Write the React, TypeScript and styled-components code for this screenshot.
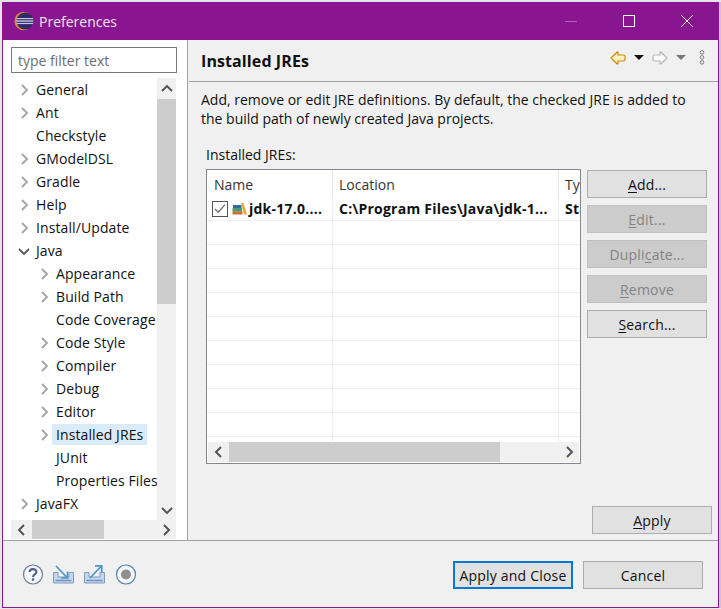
import React from "react";
import styled, { createGlobalStyle } from "styled-components";

const Global = createGlobalStyle`
	html, body {
		margin: 0;
		padding: 0;
		width: 721px;
		height: 609px;
		overflow: hidden;
		background: #e6e6e6;
	}
	* {
		box-sizing: border-box;
	}
`;

type TreeItem = {
	label: string;
	depth: number;
	twisty?: "closed" | "open";
	selected?: boolean;
};

const treeItems: TreeItem[] = [
	{ label: "General", depth: 0, twisty: "closed" },
	{ label: "Ant", depth: 0, twisty: "closed" },
	{ label: "Checkstyle", depth: 0 },
	{ label: "GModelDSL", depth: 0, twisty: "closed" },
	{ label: "Gradle", depth: 0, twisty: "closed" },
	{ label: "Help", depth: 0, twisty: "closed" },
	{ label: "Install/Update", depth: 0, twisty: "closed" },
	{ label: "Java", depth: 0, twisty: "open" },
	{ label: "Appearance", depth: 1, twisty: "closed" },
	{ label: "Build Path", depth: 1, twisty: "closed" },
	{ label: "Code Coverage", depth: 1 },
	{ label: "Code Style", depth: 1, twisty: "closed" },
	{ label: "Compiler", depth: 1, twisty: "closed" },
	{ label: "Debug", depth: 1, twisty: "closed" },
	{ label: "Editor", depth: 1, twisty: "closed" },
	{ label: "Installed JREs", depth: 1, twisty: "closed", selected: true },
	{ label: "JUnit", depth: 1 },
	{ label: "Properties Files", depth: 1 },
	{ label: "JavaFX", depth: 0, twisty: "closed" },
];

function Chevron({ dir, color = "#a6a6a6" }: { dir: "up" | "down" | "left" | "right"; color?: string }) {
	const points = {
		up: "1,8 6,3 11,8",
		down: "1,4 6,9 11,4",
		left: "8,1 3,6 8,11",
		right: "4,1 9,6 4,11",
	}[dir];
	return (
		<svg width="12" height="12" viewBox="0 0 12 12">
			<polyline points={points} fill="none" stroke={color} strokeWidth="1.9" />
		</svg>
	);
}

function EclipseLogo() {
	return (
		<svg width="20" height="20" viewBox="0 0 20 20">
			<circle cx="9.6" cy="10" r="9.2" fill="#e0873a" />
			<circle cx="11" cy="10" r="8.6" fill="#2f2a6a" />
			<rect x="2.4" y="7" width="16.8" height="1.2" fill="#c9c5de" />
			<rect x="2" y="9.4" width="17.4" height="1.3" fill="#d8d5e6" />
			<rect x="2.4" y="11.9" width="16.8" height="1.2" fill="#c9c5de" />
		</svg>
	);
}

function BackArrow() {
	return (
		<svg width="16" height="14" viewBox="0 0 16 14">
			<path
				d="M1 7 L7 1.2 L8 1.2 L8 4 L13.5 4 Q15 4 15 5.5 L15 8.5 Q15 10 13.5 10 L8 10 L8 12.8 L7 12.8 Z"
				fill="#fff3bd"
				stroke="#c98a14"
				strokeWidth="1.2"
			/>
		</svg>
	);
}

function ForwardArrow() {
	return (
		<svg width="16" height="14" viewBox="0 0 16 14">
			<path
				d="M15 7 L9 1.2 L8 1.2 L8 4 L2.5 4 Q1 4 1 5.5 L1 8.5 Q1 10 2.5 10 L8 10 L8 12.8 L9 12.8 Z"
				fill="#fbfbfb"
				stroke="#b5b5b5"
				strokeWidth="1.2"
			/>
		</svg>
	);
}

function MenuDots() {
	return (
		<svg width="6" height="15" viewBox="0 0 6 15">
			<circle cx="3" cy="2.4" r="1.8" fill="none" stroke="#7d7d7d" strokeWidth="1" />
			<circle cx="3" cy="7.4" r="1.8" fill="none" stroke="#7d7d7d" strokeWidth="1" />
			<circle cx="3" cy="12.4" r="1.8" fill="none" stroke="#7d7d7d" strokeWidth="1" />
		</svg>
	);
}

function LibraryIcon() {
	return (
		<svg width="15" height="15" viewBox="0 0 15 15">
			<rect x="0.5" y="10.2" width="10" height="3.3" fill="#c4743a" />
			<rect x="0.5" y="7" width="9.5" height="3.2" fill="#4d9a78" />
			<rect x="1" y="4" width="8.5" height="3" fill="#2f6f96" />
			<path d="M9 2.6 L11.4 1.6 L15 13.5 L12 13.5 Z" fill="#e8ab3a" />
		</svg>
	);
}

function CheckIcon() {
	return (
		<svg width="14" height="13" viewBox="0 0 14 13">
			<polyline points="2,7 5.3,10.2 12,2.6" fill="none" stroke="#6e6e6e" strokeWidth="1.3" />
		</svg>
	);
}

function HelpIcon() {
	return (
		<svg width="22" height="22" viewBox="0 0 22 22">
			<circle cx="11" cy="10.5" r="9.5" fill="#f6f7fa" stroke="#6f7f9e" strokeWidth="1.2" />
			<path d="M7.6 8 C7.8 4.2 14.4 4.2 14.4 8 C14.4 10.5 11 10.3 11 13" fill="none" stroke="#4d6088" strokeWidth="2.1" />
			<rect x="9.9" y="14.3" width="2.3" height="2.4" fill="#4d6088" />
		</svg>
	);
}

function TrayPaths() {
	return (
		<>
			<path d="M1.5 8.5 H6 V13 H17 V8.5 H21.5 V19 H1.5 Z" fill="#c5d5ea" stroke="#7d9cc4" strokeWidth="1" />
			<path d="M3.5 16.5 H19.5" stroke="#6f90bc" strokeWidth="1.4" />
		</>
	);
}

function ImportIcon() {
	return (
		<svg width="23" height="22" viewBox="0 0 23 22">
			<TrayPaths />
			<path d="M4 2 L14.5 13" stroke="#4b94c4" strokeWidth="1.7" />
			<path d="M9 14 H15.5 V7.5" fill="none" stroke="#4b94c4" strokeWidth="1.7" />
		</svg>
	);
}

function ExportIcon() {
	return (
		<svg width="23" height="22" viewBox="0 0 23 22">
			<TrayPaths />
			<path d="M7 14 L18 2.5" stroke="#4b94c4" strokeWidth="1.7" />
			<path d="M12 1.8 H18.7 V8.5" fill="none" stroke="#4b94c4" strokeWidth="1.7" />
		</svg>
	);
}

function RecordIcon() {
	return (
		<svg width="24" height="22" viewBox="0 0 24 22">
			<circle cx="12" cy="10.5" r="9.5" fill="#f6f7fa" stroke="#4f83b5" strokeWidth="1.2" />
			<circle cx="12" cy="10.5" r="5" fill="#8e8e8e" />
		</svg>
	);
}

export default function App() {
	return (
		<>
			<Global />
			<Frame>
				<TitleBar>
					<TitleLogo>
						<EclipseLogo />
					</TitleLogo>
					<TitleText>Preferences</TitleText>
					<WindowControls>
						<MinimizeGlyph />
						<MaximizeGlyph />
						<svg width="12" height="12" viewBox="0 0 12 12">
							<path d="M0 0 L12 12 M12 0 L0 12" stroke="#fff" strokeWidth="1" />
						</svg>
					</WindowControls>
				</TitleBar>
				<Main>
					<Sidebar>
						<FilterInput readOnly placeholder="type filter text" />
						<TreePanel>
							<TreeRows>
								{treeItems.map((item) => (
									<TreeRow key={item.label} $depth={item.depth}>
										<Twisty>
											{item.twisty === "closed" && <Chevron dir="right" />}
											{item.twisty === "open" && <Chevron dir="down" color="#5a5a5a" />}
										</Twisty>
										<TreeLabel $selected={item.selected}>{item.label}</TreeLabel>
									</TreeRow>
								))}
							</TreeRows>
							<VScroll>
								<ArrowBox $vertical>
									<Chevron dir="up" color="#505050" />
								</ArrowBox>
								<VThumb />
								<VTrack />
								<ArrowBox $vertical>
									<Chevron dir="down" color="#505050" />
								</ArrowBox>
							</VScroll>
						</TreePanel>
						<HScroll>
							<ArrowBox>
								<Chevron dir="left" color="#505050" />
							</ArrowBox>
							<HThumb $width={72} />
							<HTrack />
							<ArrowBox>
								<Chevron dir="right" color="#505050" />
							</ArrowBox>
						</HScroll>
					</Sidebar>
					<Content>
						<Header>
							<PageTitle>Installed JREs</PageTitle>
							<HeaderTools>
								<BackArrow />
								<DropArrow $color="#111" />
								<ForwardArrow />
								<DropArrow $color="#777" />
								<DotsSlot>
									<MenuDots />
								</DotsSlot>
							</HeaderTools>
						</Header>
						<Description>
							Add, remove or edit JRE definitions. By default, the checked JRE is added to
							<br />
							the build path of newly created Java projects.
						</Description>
						<TableLabel>
							Installed <u>J</u>REs:
						</TableLabel>
						<TableSection>
							<TableBox>
								<HeaderRow>
									<HeaderCell $width={126}>Name</HeaderCell>
									<HeaderCell $width={226}>Location</HeaderCell>
									<HeaderCell>Type</HeaderCell>
								</HeaderRow>
								<TableBody>
									<TableRow>
										<NameCell>
											<CheckBox>
												<CheckIcon />
											</CheckBox>
											<LibraryIcon />
											<JreName>jdk-17.0....</JreName>
										</NameCell>
										<LocationCell>
											<BoldText>C:\Program Files\Java\jdk-1...</BoldText>
										</LocationCell>
										<TypeCell>
											<BoldText>Standard</BoldText>
										</TypeCell>
									</TableRow>
									{Array.from({ length: 10 }).map((_, i) => (
										<TableRow key={i}>
											<NameCell />
											<LocationCell />
											<TypeCell />
										</TableRow>
									))}
								</TableBody>
								<TableScroll>
									<ArrowBox>
										<Chevron dir="left" color="#505050" />
									</ArrowBox>
									<HThumb $width={271} />
									<HTrack />
									<ArrowBox>
										<Chevron dir="right" color="#505050" />
									</ArrowBox>
								</TableScroll>
							</TableBox>
							<ButtonColumn>
								<Button>
									<u>A</u>dd...
								</Button>
								<Button $disabled>
									<u>E</u>dit...
								</Button>
								<Button $disabled>
									Dupli<u>c</u>ate...
								</Button>
								<Button $disabled>
									<u>R</u>emove
								</Button>
								<Button>
									<u>S</u>earch...
								</Button>
							</ButtonColumn>
						</TableSection>
						<ApplyRow>
							<Button>
								<u>A</u>pply
							</Button>
						</ApplyRow>
					</Content>
				</Main>
				<Footer>
					<FooterIcons>
						<HelpIcon />
						<ImportIcon />
						<ExportIcon />
						<RecordIcon />
					</FooterIcons>
					<FooterButtons>
						<Button $primary>Apply and Close</Button>
						<Button>Cancel</Button>
					</FooterButtons>
				</Footer>
			</Frame>
		</>
	);
}

const Frame = styled.div`
	width: 717px;
	height: 606px;
	margin: 2px 0 0 2px;
	border: 1px solid #8a1590;
	border-top: none;
	background: #f0f0f0;
	box-shadow: 2px 0 0 #c8c8c8;
	display: flex;
	flex-direction: column;
	font-family: "Open Sans", "Noto Sans", sans-serif;
	font-size: 14px;
	color: #111;
`;

const TitleBar = styled.div`
	height: 38px;
	flex-shrink: 0;
	background: #8a1590;
	display: flex;
	align-items: center;
	color: #f3e7f4;
`;

const TitleLogo = styled.div`
	width: 36px;
	padding-left: 11px;
	display: flex;
`;

const TitleText = styled.div`
	flex: 1;
	font-size: 14px;
`;

const WindowControls = styled.div`
	display: flex;
	align-items: center;
	gap: 46px;
	padding-right: 25px;
`;

const MinimizeGlyph = styled.div`
	width: 12px;
	height: 1px;
	background: #b066b5;
`;

const MaximizeGlyph = styled.div`
	width: 12px;
	height: 12px;
	border: 1px solid #fff;
`;

const Main = styled.div`
	height: 500px;
	flex-shrink: 0;
	display: flex;
`;

const Sidebar = styled.div`
	width: 185px;
	background: #fff;
	border-right: 1px solid #a0a0a0;
	padding: 7px 0 0 8px;
`;

const FilterInput = styled.input`
	display: block;
	width: 166px;
	height: 26px;
	border: 1px solid #7a7a7a;
	padding: 0 6px;
	outline: none;
	font: inherit;
	background: #fff;
	&::placeholder {
		color: #6d6d6d;
		opacity: 1;
	}
`;

const TreePanel = styled.div`
	margin-top: 5px;
	width: 165px;
	height: 442px;
	display: flex;
`;

const TreeRows = styled.div`
	width: 146px;
	overflow: hidden;
`;

const TreeRow = styled.div<{ $depth: number }>`
	height: 23px;
	display: flex;
	align-items: center;
	padding-left: ${(p) => p.$depth * 20 + 7}px;
	white-space: nowrap;
	letter-spacing: 0.1px;
`;

const Twisty = styled.div`
	width: 12px;
	height: 12px;
	flex-shrink: 0;
	display: flex;
	margin-right: 4px;
`;

const TreeLabel = styled.div<{ $selected?: boolean }>`
	padding: 1px 4px;
	margin-left: -2px;
	background: ${(p) => (p.$selected ? "#d9ebf9" : "transparent")};
`;

const VScroll = styled.div`
	width: 19px;
	height: 442px;
	background: #f0f0f0;
	display: flex;
	flex-direction: column;
`;

const ArrowBox = styled.div<{ $vertical?: boolean }>`
	width: ${(p) => (p.$vertical ? "19px" : "21px")};
	height: ${(p) => (p.$vertical ? "21px" : "100%")};
	flex-shrink: 0;
	display: flex;
	align-items: center;
	justify-content: center;
`;

const VThumb = styled.div`
	height: 205px;
	background: #cdcdcd;
`;

const VTrack = styled.div`
	flex: 1;
`;

const HScroll = styled.div`
	width: 165px;
	height: 19px;
	background: #f0f0f0;
	display: flex;
`;

const HThumb = styled.div<{ $width: number }>`
	width: ${(p) => p.$width}px;
	background: #cdcdcd;
`;

const HTrack = styled.div`
	flex: 1;
`;

const Content = styled.div`
	flex: 1;
	display: flex;
	flex-direction: column;
`;

const Header = styled.div`
	height: 42px;
	margin-left: 1px;
	padding: 0 13px 0 12px;
	border-bottom: 1px solid #a0a0a0;
	display: flex;
	align-items: center;
	justify-content: space-between;
`;

const PageTitle = styled.div`
	font-weight: 700;
	font-size: 16px;
	letter-spacing: 0.1px;
`;

const HeaderTools = styled.div`
	display: flex;
	align-items: center;
	gap: 8px;
	padding-bottom: 6px;
`;

const DropArrow = styled.div<{ $color: string }>`
	width: 0;
	height: 0;
	border-left: 5px solid transparent;
	border-right: 5px solid transparent;
	border-top: 5px solid ${(p) => p.$color};
`;

const DotsSlot = styled.div`
	display: flex;
	margin-left: 5px;
`;

const Description = styled.div`
	padding: 8px 0 0 13px;
	line-height: 19px;
`;

const TableLabel = styled.div`
	margin: 18px 0 0 18px;
	line-height: 18px;
`;

const TableSection = styled.div`
	margin: 5px 0 0 18px;
	display: flex;
	gap: 6px;
`;

const TableBox = styled.div`
	width: 375px;
	height: 295px;
	border: 1px solid #828790;
	background: #fff;
	display: flex;
	flex-direction: column;
`;

const HeaderRow = styled.div`
	height: 27px;
	flex-shrink: 0;
	display: flex;
	overflow: hidden;
`;

const HeaderCell = styled.div<{ $width?: number }>`
	width: ${(p) => (p.$width ? `${p.$width}px` : "auto")};
	flex: ${(p) => (p.$width ? "none" : 1)};
	padding-left: ${(p) => (p.$width === 126 ? 7 : 6)}px;
	padding-top: 2px;
	display: flex;
	align-items: center;
	color: #333;
	white-space: nowrap;
	border-right: ${(p) => (p.$width ? "1px solid #e5e5e5" : "none")};
`;

const TableBody = styled.div`
	flex: 1;
	overflow: hidden;
`;

const TableRow = styled.div`
	height: 24px;
	display: flex;
	border-bottom: 1px solid #f0f0f0;
`;

const NameCell = styled.div`
	width: 126px;
	flex-shrink: 0;
	padding-left: 5px;
	display: flex;
	align-items: center;
	border-right: 1px solid #e9f0f8;
`;

const LocationCell = styled.div`
	width: 226px;
	flex-shrink: 0;
	padding-left: 6px;
	display: flex;
	align-items: center;
	border-right: 1px solid #e9f0f8;
`;

const TypeCell = styled.div`
	flex: 1;
	min-width: 0;
	padding-left: 6px;
	display: flex;
	align-items: center;
	overflow: hidden;
`;

const CheckBox = styled.div`
	width: 16px;
	height: 16px;
	border: 1px solid #555;
	margin-right: 4px;
	flex-shrink: 0;
	display: flex;
	align-items: center;
	justify-content: center;
`;

const BoldText = styled.span`
	font-weight: 700;
	white-space: nowrap;
	letter-spacing: 0.24px;
`;

const JreName = styled(BoldText)`
	margin-left: 2px;
`;

const TableScroll = styled.div`
	height: 20px;
	margin: 0 1px 1px;
	flex-shrink: 0;
	background: #f0f0f0;
	display: flex;
`;

const ButtonColumn = styled.div`
	width: 120px;
	padding-top: 1px;
	display: flex;
	flex-direction: column;
	gap: 7px;
`;

const Button = styled.div<{ $disabled?: boolean; $primary?: boolean }>`
	width: 120px;
	height: 28px;
	flex-shrink: 0;
	display: flex;
	align-items: center;
	justify-content: center;
	white-space: pre;
	letter-spacing: 0.2px;
	background: ${(p) => (p.$disabled ? "#cccccc" : "#e1e1e1")};
	color: ${(p) => (p.$disabled ? "#838383" : "#111")};
	border: ${(p) => (p.$primary ? "2px solid #0078d7" : p.$disabled ? "1px solid #bfbfbf" : "1px solid #adadad")};
	u {
		text-underline-offset: 2px;
	}
`;

const ApplyRow = styled.div`
	margin-top: auto;
	padding: 0 6px 6px 0;
	display: flex;
	justify-content: flex-end;
`;

const Footer = styled.div`
	height: 67px;
	flex-shrink: 0;
	border-top: 1px solid #a0a0a0;
	display: flex;
	align-items: flex-start;
	justify-content: space-between;
	padding: 20px 15px 0 19px;
`;

const FooterIcons = styled.div`
	display: flex;
	align-items: center;
	gap: 8px;
	margin-top: 3px;
`;

const FooterButtons = styled.div`
	display: flex;
	gap: 10px;
`;
